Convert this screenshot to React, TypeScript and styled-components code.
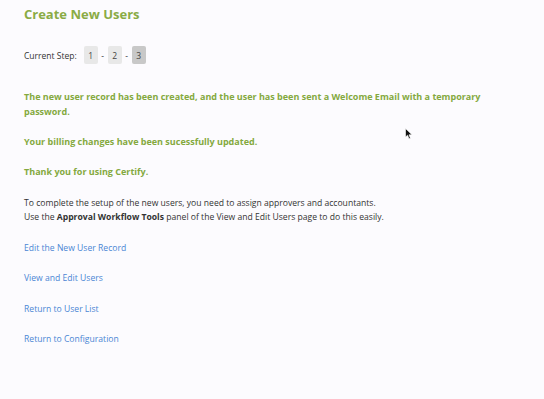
import React from 'react'
import styled, { createGlobalStyle } from 'styled-components'

const GlobalStyle = createGlobalStyle`
  html, body {
    margin: 0;
    padding: 0;
    background: #fcfbfe;
  }
  body {
    font-family: 'Open Sans', 'Noto Sans', sans-serif;
    color: #333333;
  }
`

const Page = styled.div`
  position: relative;
  min-height: 399px;
  padding: 5px 24px 0;
  box-sizing: border-box;
`

const Title = styled.h1`
  margin: 0;
  font-size: 13px;
  line-height: 18px;
  font-weight: 700;
  color: #8aab45;
`

const StepRow = styled.div`
  display: flex;
  align-items: center;
  margin-top: 23px;
  font-size: 8.5px;
  height: 18px;
`

const StepLabel = styled.span`
  margin-right: 7px;
`

const StepBox = styled.span<{ $active?: boolean }>`
  display: inline-flex;
  align-items: center;
  justify-content: center;
  width: 14px;
  height: 18px;
  border-radius: 2px;
  background: ${(p) => (p.$active ? '#c8c8c8' : '#e8e8e8')};
  color: #444;
`

const Dash = styled.span`
  width: 10px;
  text-align: center;
`

const Notice = styled.p<{ $gap?: number }>`
  margin: ${(p) => p.$gap ?? 15}px 0 0;
  max-width: 470px;
  font-size: 9px;
  line-height: 15px;
  font-weight: 700;
  color: #84a93e;
`

const Info = styled.p`
  margin: 17px 0 0;
  font-size: 8.6px;
  line-height: 14px;
  color: #333;
`

const Links = styled.div`
  display: flex;
  flex-direction: column;
  align-items: flex-start;
  gap: 15.5px;
  margin-top: 17px;
`

const Link = styled.a`
  font-size: 8.6px;
  line-height: 15px;
  color: #4a86d4;
  text-decoration: none;
`

const Cursor = styled.svg`
  position: absolute;
  left: 405px;
  top: 128px;
`

const App = () => {
  return (
    <>
      <GlobalStyle />
      <Page>
        <Title>Create New Users</Title>
        <StepRow>
          <StepLabel>Current Step:</StepLabel>
          <StepBox>1</StepBox>
          <Dash>-</Dash>
          <StepBox>2</StepBox>
          <Dash>-</Dash>
          <StepBox $active>3</StepBox>
        </StepRow>
        <Notice $gap={24.5}>
          The new user record has been created, and the user has been sent a Welcome Email with a temporary
          password.
        </Notice>
        <Notice>Your billing changes have been sucessfully updated.</Notice>
        <Notice>Thank you for using Certify.</Notice>
        <Info>
          To complete the setup of the new users, you need to assign approvers and accountants.
          <br />
          Use the <b>Approval Workflow Tools</b> panel of the View and Edit Users page to do this easily.
        </Info>
        <Links>
          <Link href="#">Edit the New User Record</Link>
          <Link href="#">View and Edit Users</Link>
          <Link href="#">Return to User List</Link>
          <Link href="#">Return to Configuration</Link>
        </Links>
        <Cursor width="8" height="12" viewBox="0 0 8 12">
          <path d="M0.5 0.5 L0.5 9 L2.6 7.2 L4 10.8 L5.4 10.2 L4 6.8 L7 6.8 Z" fill="#111" stroke="#fff" strokeWidth="0.6" />
        </Cursor>
      </Page>
    </>
  )
}

export default App
